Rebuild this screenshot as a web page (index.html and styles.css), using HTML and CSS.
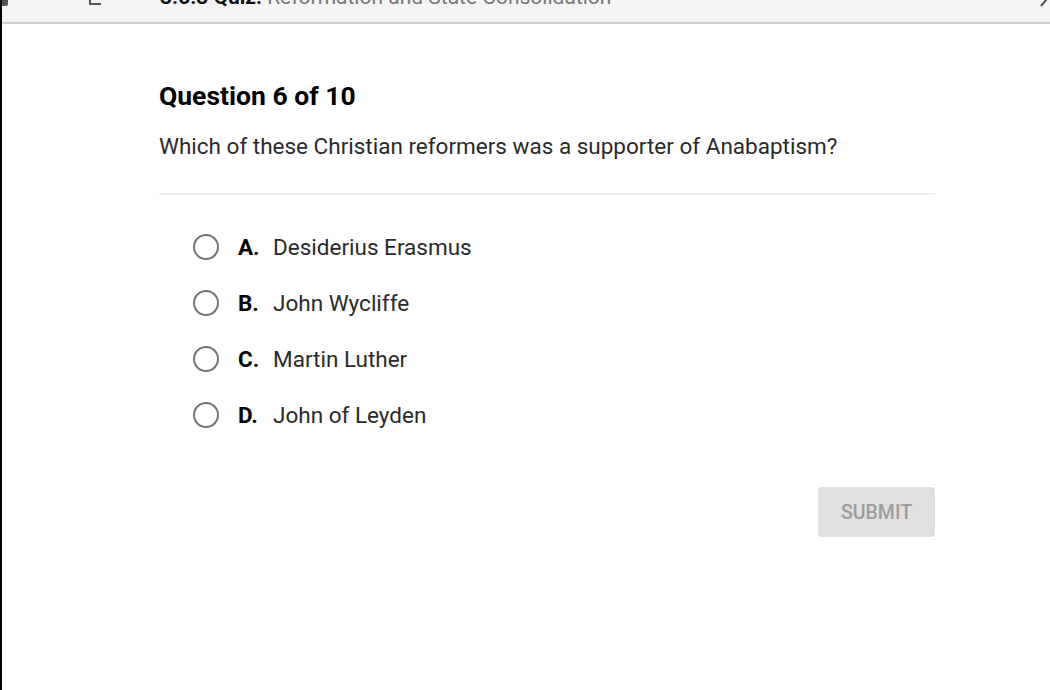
FILE: index.html
```html
<!DOCTYPE html>
<html>
<head>
<meta charset="utf-8">
<link rel="stylesheet" href="styles.css">
</head>
<body>
<div class="frame">
  <header class="topbar">
    <span class="corner"></span>
    <div class="bar-inner">
      <svg class="bar-icon" width="14" height="6" viewBox="0 0 14 6"><path d="M2 -4 V4 H13" fill="none" stroke="#555" stroke-width="2"/></svg>
      <div class="bar-title"><b>3.5.3 Quiz:</b> Reformation and State Consolidation</div>
      <svg class="bar-chev" width="10" height="8" viewBox="0 0 10 8"><path d="M1 -6 L6 0 L1 6" fill="none" stroke="#555" stroke-width="2"/></svg>
    </div>
  </header>
  <main class="quiz">
    <h1 class="q-num">Question 6 of 10</h1>
    <p class="q-text">Which of these Christian reformers was a supporter of Anabaptism?</p>
    <hr class="divider">
    <ul class="options">
      <li class="option"><span class="radio"></span><b class="letter">A.</b><span class="answer">Desiderius Erasmus</span></li>
      <li class="option"><span class="radio"></span><b class="letter">B.</b><span class="answer">John Wycliffe</span></li>
      <li class="option"><span class="radio"></span><b class="letter">C.</b><span class="answer">Martin Luther</span></li>
      <li class="option"><span class="radio"></span><b class="letter">D.</b><span class="answer">John of Leyden</span></li>
    </ul>
    <div class="actions"><button class="submit">SUBMIT</button></div>
  </main>
</div>
</body>
</html>
```
FILE: styles.css
```css
html, body {
  margin: 0;
  padding: 0;
  background: #fff;
  font-family: Roboto, "Liberation Sans", sans-serif;
}
.frame {
  border-left: 2px solid #000;
  height: 690px;
  box-sizing: border-box;
  overflow: hidden;
}
.topbar {
  position: relative;
  height: 22px;
  background: #f4f4f4;
  border-bottom: 2px solid #cfcfcf;
  overflow: hidden;
}
.corner {
  position: absolute;
  left: 0;
  top: 0;
  width: 6px;
  height: 6px;
  background: #555;
  border-radius: 0 0 2px 0;
}
.bar-inner {
  display: flex;
  align-items: flex-start;
  height: 8px;
}
.bar-icon {
  margin-left: 86px;
  flex: none;
}
.bar-title {
  margin-left: 58px;
  margin-top: -15px;
  font-size: 21px;
  line-height: 24px;
  color: #777;
  white-space: nowrap;
}
.bar-title b {
  color: #111;
  font-weight: 700;
}
.bar-chev {
  margin-left: auto;
  margin-right: 0;
  flex: none;
}
.quiz {
  margin-left: 157px;
  width: 776px;
}
.q-num {
  margin: 56px 0 0;
  font-size: 26.5px;
  line-height: 32px;
  font-weight: 700;
  color: #000;
}
.q-text {
  margin: 20px 0 0;
  font-size: 22.5px;
  line-height: 28px;
  color: #2a2a2a;
}
.divider {
  margin: 33px 0 0;
  border: 0;
  border-top: 2px solid #eeeeee;
}
.options {
  list-style: none;
  margin: 24px 0 0;
  padding: 0 0 0 34px;
}
.option {
  display: flex;
  align-items: center;
  height: 56px;
  font-size: 22.5px;
  color: #2a2a2a;
}
.radio {
  width: 22px;
  height: 22px;
  border: 2px solid #757575;
  border-radius: 50%;
  flex: none;
  margin-right: 19px;
}
.letter {
  font-weight: 700;
  color: #000;
  width: 35px;
  flex: none;
}
.actions {
  display: flex;
  justify-content: flex-end;
  margin-top: 44px;
}
.submit {
  width: 117px;
  height: 50px;
  background: #e0e0e0;
  border: 0;
  border-radius: 4px;
  color: #9e9e9e;
  font-family: Roboto, "Liberation Sans", sans-serif;
  font-size: 19.5px;
  font-weight: 500;
}
```
